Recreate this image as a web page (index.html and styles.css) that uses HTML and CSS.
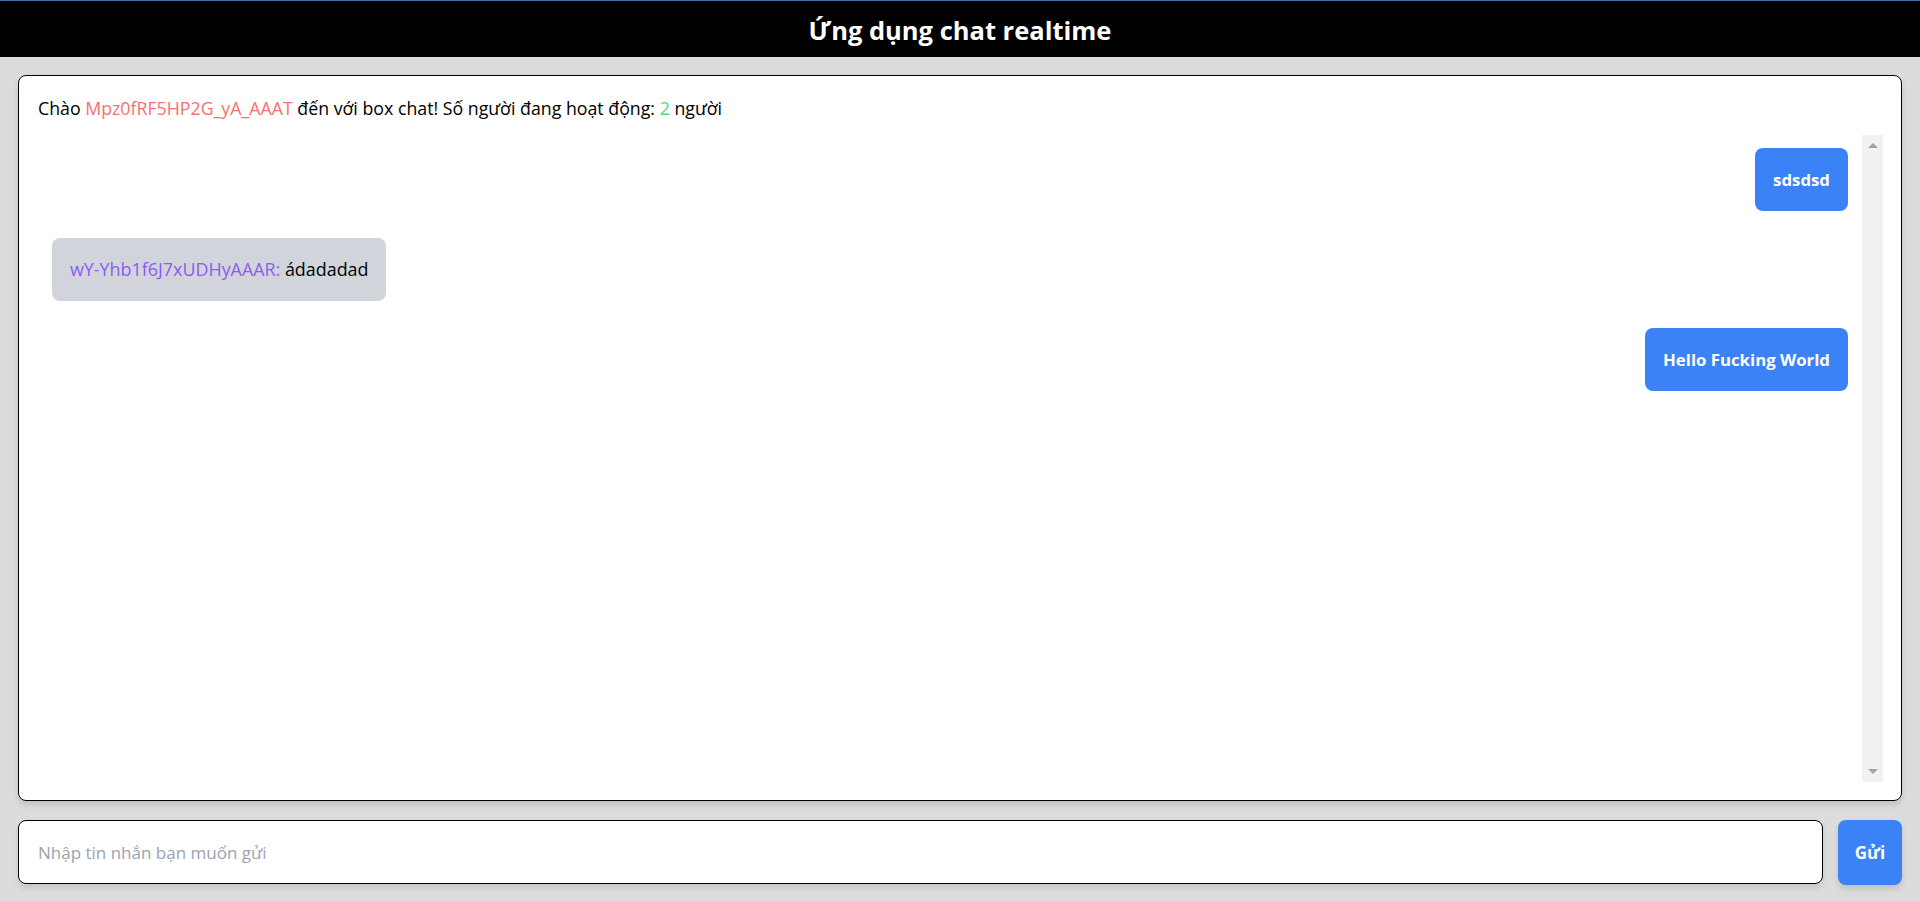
FILE: index.html
```html
<!DOCTYPE html>
<html lang="vi">
<head>
<meta charset="utf-8">
<title>Ứng dụng chat realtime</title>
<link rel="stylesheet" href="styles.css">
</head>
<body>
<header class="app-header">
  <h1 class="app-title">Ứng dụng chat realtime</h1>
</header>
<main class="app-main">
  <section class="chat-box">
    <p class="greeting">Chào <span class="me-name">Mpz0fRF5HP2G_yA_AAAT</span> đến với box chat! Số người đang hoạt động: <span class="online">2</span> người</p>
    <div class="messages">
      <div class="message-list">
        <div class="bubble bubble-mine">sdsdsd</div>
        <div class="bubble bubble-other"><span class="sender">wY-Yhb1f6J7xUDHyAAAR:</span> ádadadad</div>
        <div class="bubble bubble-mine">Hello Fucking World</div>
      </div>
      <div class="scrollbar">
        <span class="arrow arrow-up"></span>
        <span class="arrow arrow-down"></span>
      </div>
    </div>
  </section>
  <form class="composer">
    <input class="composer-input" type="text" placeholder="Nhập tin nhắn bạn muốn gửi">
    <button class="composer-send" type="button">Gửi</button>
  </form>
</main>
</body>
</html>
```
FILE: styles.css
```css
* { box-sizing: border-box; }
html, body { margin: 0; padding: 0; }
body {
  background: #dcdcdc;
  font-family: "Open Sans", "Noto Sans", sans-serif;
  font-size: 17px;
  color: #000;
  height: 901px;
  overflow: hidden;
}
.app-header {
  border-top: 1px solid #4a6fa5;
  background: #000;
  height: 57px;
  display: flex;
  align-items: center;
  justify-content: center;
}
.app-title {
  margin: 0;
  color: #fff;
  font-size: 25.5px;
  font-weight: 700;
  line-height: 32px;
  padding-top: 2px;
}
.app-main {
  padding: 18px 18px 0;
  display: flex;
  flex-direction: column;
}
.chat-box {
  background: #fff;
  border: 1px solid #000;
  border-radius: 8px;
  height: 726px;
  padding: 18px 18px 18px 19px;
  box-shadow: 0 4px 6px rgba(0,0,0,0.12);
  display: flex;
  flex-direction: column;
}
.greeting {
  margin: 0 0 13px;
  height: 28px;
  line-height: 28px;
  font-size: 17.75px;
}
.me-name { color: #f87171; }
.online { color: #4ade80; }
.messages {
  display: flex;
  height: 647px;
}
.message-list {
  flex: 1;
  padding: 13px 14px 13px 14px;
  display: flex;
  flex-direction: column;
  align-items: flex-start;
  gap: 27px;
}
.bubble {
  border-radius: 8px;
  padding: 20px 18px;
  line-height: 23px;
}
.bubble-mine {
  align-self: flex-end;
  background: #3b82f6;
  color: #fff;
  font-weight: 700;
  font-size: 16.8px;
}
.bubble-other {
  background: #d1d5db;
  color: #000;
  font-size: 17.9px;
}
.sender { color: #8b5cf6; }
.scrollbar {
  width: 21px;
  background: #f1f1f1;
  display: flex;
  flex-direction: column;
  justify-content: space-between;
  align-items: center;
  padding: 8px 0;
}
.arrow {
  width: 0;
  height: 0;
  border-left: 5px solid transparent;
  border-right: 5px solid transparent;
}
.arrow-up { border-bottom: 5px solid #a3a3a3; }
.arrow-down { border-top: 5px solid #a3a3a3; }
.composer {
  margin: 19px 0 0;
  display: flex;
  gap: 15px;
  height: 64px;
}
.composer-input {
  flex: 1;
  border: 1px solid #000;
  border-radius: 8px;
  background: #fff;
  padding: 0 19px;
  font-family: inherit;
  font-size: 17px;
  color: #000;
  box-shadow: 0 4px 6px rgba(0,0,0,0.1);
  outline: none;
}
.composer-input::placeholder { color: #9ca3af; }
.composer-send {
  width: 64px;
  height: 65px;
  border: none;
  border-radius: 8px;
  background: #3b82f6;
  color: #fff;
  font-family: inherit;
  font-size: 17px;
  font-weight: 700;
  box-shadow: 0 4px 6px rgba(0,0,0,0.12);
  padding: 0;
}
```
